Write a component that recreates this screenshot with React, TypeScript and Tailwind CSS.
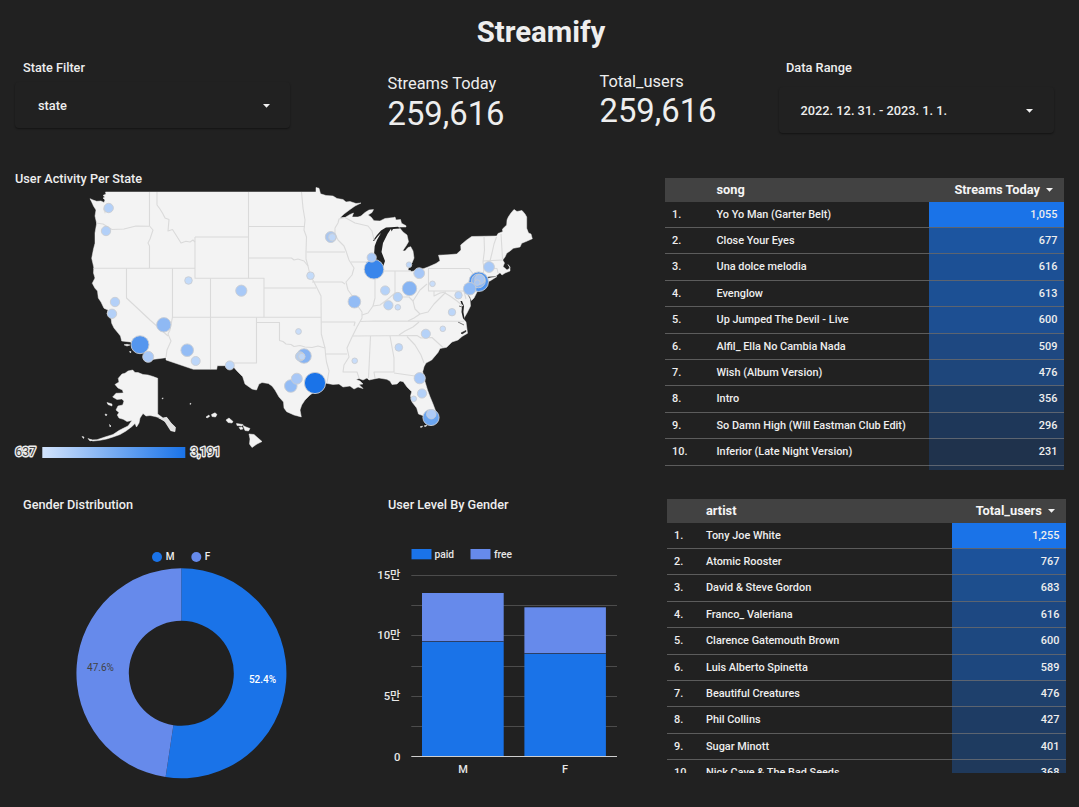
import React from "react";

type Row = { label: string; value: number };

const songs: Row[] = [
  { label: "Yo Yo Man (Garter Belt)", value: 1055 },
  { label: "Close Your Eyes", value: 677 },
  { label: "Una dolce melodia", value: 616 },
  { label: "Evenglow", value: 613 },
  { label: "Up Jumped The Devil - Live", value: 600 },
  { label: "Alfil_ Ella No Cambia Nada", value: 509 },
  { label: "Wish (Album Version)", value: 476 },
  { label: "Intro", value: 356 },
  { label: "So Damn High (Will Eastman Club Edit)", value: 296 },
  { label: "Inferior (Late Night Version)", value: 231 },
];

const artists: Row[] = [
  { label: "Tony Joe White", value: 1255 },
  { label: "Atomic Rooster", value: 767 },
  { label: "David & Steve Gordon", value: 683 },
  { label: "Franco_ Valeriana", value: 616 },
  { label: "Clarence Gatemouth Brown", value: 600 },
  { label: "Luis Alberto Spinetta", value: 589 },
  { label: "Beautiful Creatures", value: 476 },
  { label: "Phil Collins", value: 427 },
  { label: "Sugar Minott", value: 401 },
  { label: "Nick Cave & The Bad Seeds", value: 368 },
];

function Caret() {
  return (
    <svg width="7" height="4" viewBox="0 0 7 4" className="shrink-0">
      <path d="M0 0h7L3.5 3.7z" fill="#f1f1f1" />
    </svg>
  );
}

function RankTable({
  rows,
  name,
  metric,
  indexCol,
  valueCol,
  height,
}: {
  rows: Row[];
  name: string;
  metric: string;
  indexCol: string;
  valueCol: string;
  height: string;
}) {
  const max = rows[0].value;
  const heat = (v: number) => ({ backgroundColor: `rgba(26,115,232,${v / max})` });
  return (
    <div className={`w-[399.4px] overflow-hidden text-[10.9px] font-medium text-[#eeeeee] ${height}`}>
      <div className="flex h-[23.7px] items-center bg-[#424242] text-[12.8px] font-bold text-[#f5f5f5]">
        <div className={indexCol} />
        <div className="flex-1 leading-[22px]">{name}</div>
        <div className="flex items-center gap-[6.5px] pr-[11px] leading-[22px]">
          {metric}
          <Caret />
        </div>
      </div>
      {rows.map((r, i) => (
        <div key={r.label} className="flex h-[26.4px]">
          <div className={`border-b border-[#5c5c5c] pl-[7px] leading-[26.8px] ${indexCol}`}>{i + 1}.</div>
          <div className="flex-1 border-b border-[#5c5c5c] leading-[26.8px] whitespace-nowrap">{r.label}</div>
          <div
            className={`border-b border-[#5c6470] pr-[7px] text-right leading-[26.8px] ${valueCol}`}
            style={heat(r.value)}
          >
            {r.value.toLocaleString("en-US")}
          </div>
        </div>
      ))}
      <div className="flex h-2 justify-end">
        <div className={valueCol} style={heat(rows[rows.length - 1].value)} />
      </div>
    </div>
  );
}

const mainland =
  "90,198.7 93,200 96.7,201.3 101,201 104,202.5 105,200 103,198 105,197 103,195.5 106,194 105.5,192 316,192 316,187.5 319,188.3 320.5,193.8 326,195.5 333,196 337,198.5 343,199.5 346,202 350,201.5 356,203.5 361,203 355,206 350,209.5 344,214 340,217.8 345,217.5 350,214.5 353.5,213 352,217 358,217 361,216 365,212.5 369,210 373.5,209.6 372,212.5 368,215 371,217 374,220.7 380,221 385,218.5 394,217.5 395,217 396,220 400.5,219.5 401.5,223.3 406,225.7 406,227 398,227 400,228.3 403,232 407,235 408.5,241.7 406,246 402.7,250.7 405,251 408,247.5 410.7,246.7 413,251 414,258 412,263 409,266 408,270 411.7,271.5 418,270 424,268.5 428,267 436,263.5 440,260.7 439.3,258 438.5,255.2 448,254.8 456.7,254 461,250 460.7,245 466.7,240 471.7,236.5 496.7,236 498,233.5 502.7,231.7 502.5,229 506.7,225 507,220 508.3,217 511,213 514,209.5 517,211.5 522,210.5 525,214 526.7,217 526.7,228.3 528.5,233 531,234 532.3,238.8 526,241.5 521.7,243.3 520,247 513.3,248.3 510,251 506.7,253.3 505,257 502.7,260 504.5,263 503,266.5 507,270 510,268 508,264.5 510,267 510,271 505,273 502,275 500,272.7 496,276 489,276.5 482,279.5 497,276.5 490,281 479,284 478,290 474,298 471.5,300.5 470,297 466,292 470,299 470.5,306 467,313 463.5,319 466,322 467.5,333.3 462,336.5 458,340 452,342 446.7,347.3 440,348.5 438,352.5 431.7,360 426,363 424,366.7 422.7,371.7 425,381.7 427.5,390 430,396.7 433,404 436,412 436.7,420 431.7,425 427,422 424,416 418.5,414 416.7,408 412,402 410.5,396 411.7,391.7 407,387 403.3,381.7 400,381 397,384 392,384.5 390,381 386.7,379.3 379,378 375,378.7 369,380 367,378 363,380 359,378.5 356,379.5 360,381 363,384 359,384.5 363,388.5 358,387 354,389 350,386 343,387 339,384 333,384.5 325,383 317,390 310,395 305,400 301.7,405 300,410 301.3,416.9 294,415 286.7,411.7 284,408 283.5,402 279,397 275,390 272,386 268.3,383.5 262,382.5 259,384 256.5,390 252,389 245,384 242.7,376.7 237,371 233.3,366.7 228,367 225,365.7 217.3,365.7 216.7,369.3 193.3,369.3 166,360 166,357.7 148,360 145,352 139,345 130,341.9 121.7,341 120.5,336 118.3,333.3 114,328 111.7,323.3 111,318 107,314 108,310 104,308.3 101,302 98.3,298 97.5,291 95,288.3 92.3,283.3 95,278 93.5,273 93.8,267.3 91.7,258.3 93.5,249 95,243.3 95,233 96.7,223.3 95,216 96,210 93.5,206 91.7,202";

const lakeMichigan =
  "398,226.7 391,227.3 386,227.5 381,230.5 377,235 373,240.5 374,241 378,236 381,233 377,240 374.7,246 374,255 374,268 376,272 380,271.5 383.3,266 385,261 381.5,252 383,243 387.5,234 391,228.8 391.5,231.5 393,229 400,228.5";

const alaska =
  "132.7,370 135,372.5 138,372.5 143,374.5 148,375 153,376.5 157.7,378.3 157.7,414 163,418 166.7,417.3 171,423 175.5,427.3 175,431.7 170.7,430.7 165,421.7 160,418 155,416.5 150,415.5 146,416 143,413.5 140,418 139,423 136.5,427 135,423.5 131.7,426.7 126,431 120,434.5 113,437 106.7,439 100,440.3 93,441 90,440 97,439.7 105,437 113,434.5 119,430.5 123.3,428.3 128,426 132,420.5 127,421.5 123.3,419.3 119,418 117.3,415 119,412.5 116,410 118,406 122.7,405 124,401 121.7,399 117,399.5 112.7,397 116,393.3 123.3,393 122.5,390 118,388 115,384.5 119,382 118.3,378.3 122,374 125,373.3 128,371";

const borders = [
  "96,223 103,224 112,229.5 124,229 136,226 149,226.3",
  "149.5,192 149.5,226 153,230 150,239 148,243 149.5,246 149.5,268",
  "93.5,268.3 195,268.3",
  "157,192 157,205 160,209 163,214 165,218 169,219.5 168,231 172.5,229.5 176,235 181,243 186,241.3 190,242 193,240 195,242",
  "195,237 248.5,237",
  "195,237 195,278.3 264,278.3 264,317.3",
  "248.5,192 248.5,278.3",
  "248.5,226.5 305,226.5",
  "248.5,258 291.5,258 294,260 298,259 304,261 308,266 310,275 314,282 318,290 321,296 321.3,334 325,348 325.7,356 326.5,362 329,371 327,383",
  "301.5,192 303,208 305,220 304,230 306.5,237 306,252 306,259 308,266",
  "172.5,268.3 172.5,317 170,330 168,334 171,341 167,350 166,357",
  "210.5,278.3 210.5,369",
  "172.5,317.3 321,317.3",
  "264,288 316,288",
  "126.5,268.3 126.5,298 150,320 168,336",
  "256.5,317.3 256.5,363 233,363",
  "256.5,322.5 279.5,322.5 279.5,340.5 283,341.5 286,344 291,344.5 294,346.5 300,345.5 305,347 312,347.5 318,346 325,348",
  "306.5,252 345,252",
  "312,282 342,282 345,284",
  "345,217.5 339,219 338,223 335,228 335,234 338,240 344,246 346,251 349,260 354,268 352,275 346,282 348,290 353,297 357,305 362,312 362,318 357,327 352,337 347,348 349,357 344,365 343,372 357,372 359,378",
  "351,262 374,262",
  "345,217.5 355,223 368,226 372,231 374,240",
  "375,272 375,298 373,306",
  "395,271 395,293",
  "379,271 411,271",
  "321.3,322 355,322 354,326",
  "326,354 347,354",
  "360,321.5 375,321 464,321.3",
  "353,336 417,335.5 421,338 432,337.5 443,347.5",
  "370.5,336 368.5,378",
  "390,336 394,358 394,372 374,372 375,378",
  "394,373 415,376 418,374 422,374",
  "407,336.5 415,345 421,355 424,363",
  "399,335 405,331 413,327 419,322",
  "362,315 368,313 373,306 380,305 388,299 395,293 402,297 409,297 413,301 420,290 427,284",
  "428.5,268 428.5,291 464,291 466,299",
  "428.5,268.5 469,268.5 474,275 470,280 473,285 467,291",
  "484,236 484.5,250 483,262 484,268 483,277",
  "496.5,237 494,244 492,253 490,261",
  "501,234 502,250 502.5,259",
  "483,261 502,260",
  "484,268 497,268.5 498,273",
  "413,301 415,309 420,314 428,312 434,304 440,298 445,293 450,296 457,301 463,306",
  "420,314 414,318 408,321",
  "434,291 434,296 440,293 446,292",
];

const hawaii = [
  "206,417 209,415 209.5,416.5 207,418",
  "211.5,414.5 215,412.8 217,414.5 215.5,417 212,416.5",
  "226,420 229,418 233,421.5 232,423 228,422.5",
  "236.5,423.5 243,424.5 242,426 237,425.5",
  "239,427.5 242,427 243,429 240.5,429.5",
  "243,425.5 246,427 250,428.5 248.5,431 245,430.5",
  "249,434 254,434.5 258,438 262,441.5 257,444 252,447.5 249.5,444 250,439",
];

const islets = [
  "107,402.5 112,404 112,406 108,404.5",
  "105,414 107,414.5 106,416",
  "109.5,424.5 111,426 110,427",
  "82,436.5 84,437 83.5,438.5",
  "88,438.5 92,440 90,441",
  "162,398 163.3,398.3 162.5,399",
  "190,403.3 191,403.5 190.3,404.6",
  "124,344.8 127,344.3 130,345 127,346",
  "129.5,351.5 131,351.5 130.5,353",
  "420,427 422.5,426 422,427.3",
  "424,426 427,425 426,426.5",
];

// cx, cy, radius, fill
const bubbles: [number, number, number, string][] = [
  [108.7, 208, 4.7, "#b3d0f8"],
  [106, 231, 4.7, "#b3d0f8"],
  [188.5, 280.5, 3.8, "#c3dbfa"],
  [241.3, 290.7, 5.6, "#a8c9f7"],
  [310.5, 275.7, 3.8, "#c3dbfa"],
  [115, 302, 4.7, "#b3d0f8"],
  [112, 313.8, 4.7, "#b3d0f8"],
  [163.8, 324.8, 7.2, "#8fb9f4"],
  [140, 344.7, 9, "#5596ee"],
  [148.2, 356.8, 5.5, "#aac9f7"],
  [187.2, 350.2, 6.3, "#93bcf5"],
  [195.7, 361, 4.5, "#bcd6f9"],
  [229.8, 365.4, 4.5, "#bcd6f9"],
  [298.5, 331.5, 2.9, "#c8ddfa"],
  [304, 356, 7.3, "#87b4f3"],
  [300, 356.4, 4.6, "#b6cdec"],
  [301.8, 356.6, 3.3, "#c0d7f6"],
  [290.8, 386, 6.3, "#93bcf5"],
  [296.8, 378.7, 5.5, "#a9c8f6"],
  [315, 383, 10.6, "#1a73e8"],
  [330.8, 237, 5.5, "#aac6ee"],
  [332.3, 237.3, 3.7, "#bfd7f8"],
  [374, 269.3, 9.8, "#3a86eb"],
  [371.7, 257.5, 4.6, "#a9c9f7"],
  [409, 264.7, 2.8, "#bcd6f9"],
  [419.2, 273.2, 5.4, "#a6c7f7"],
  [409.5, 288.5, 7.2, "#86b4f3"],
  [432.5, 283.8, 2.8, "#c8ddfa"],
  [385.2, 290.5, 4.6, "#b5d2f8"],
  [397.8, 297, 4.6, "#b5d2f8"],
  [354.4, 301.7, 6.3, "#93bcf5"],
  [388.4, 305.3, 4.6, "#b5d2f8"],
  [397.8, 307.3, 2.8, "#c8ddfa"],
  [489, 267, 5.4, "#a8c9f7"],
  [478.7, 281.7, 9.8, "#4f94ee"],
  [478.4, 280.9, 6.9, "#8fb8f3"],
  [479.8, 279.3, 5, "#a8c6f2"],
  [477.3, 282.6, 2.8, "#a8c6f2"],
  [469.7, 288.7, 6.3, "#8fbaf5"],
  [458.5, 295.2, 3.7, "#bcd6f9"],
  [452, 312.2, 3.7, "#bcd6f9"],
  [425.8, 333.8, 4.6, "#b5d2f8"],
  [442.8, 328.8, 2.8, "#c8ddfa"],
  [398.8, 347.4, 3.8, "#bcd6f9"],
  [354.7, 360.8, 2.8, "#c8ddfa"],
  [419.7, 378.2, 5.6, "#a8c8f7"],
  [422, 393.5, 4.6, "#b4d1f8"],
  [413.7, 398.8, 2.8, "#c3dbfa"],
  [431, 417.5, 8.1, "#6ba5f0"],
  [431.3, 414.2, 4.7, "#aecbf6"],
];

function UsMap() {
  return (
    <svg width="650" height="284" viewBox="0 186 650 284" className="block">
      <defs>
        <linearGradient id="scale">
          <stop offset="0" stopColor="#d2e3fc" />
          <stop offset="1" stopColor="#1a73e8" />
        </linearGradient>
      </defs>
      <g fill="#f3f3f3" stroke="#f3f3f3" strokeWidth="0.5" strokeLinejoin="round">
        <polygon points={mainland} />
        <polygon points={alaska} />
        {[...hawaii, ...islets].map((p) => (
          <polygon key={p} points={p} />
        ))}
      </g>
      <polygon points="158,418 163,418 166.7,417.3 171,423 175.3,427.5 174.5,431 170.7,430 165,421.5" fill="#e0e0e0" />
      <polygon points={lakeMichigan} fill="#212121" />
      <path d="M460.5 301l1.500 5-.5 6 1.700 7 1.200-1-1-6 .6-6-2-5z" fill="#212121" />
      <path d="M461 333l5-2.500v1l-4 2.500z M459 306l3 1 M458 322l6 3" fill="#212121" stroke="#212121" strokeWidth="0.600" />
      <path d="M103 209l2-4 3 0-1 4-2 5z" fill="#dcdcdc" />
      <g fill="none" stroke="#dadada" strokeWidth="1.1" strokeLinejoin="round">
        {borders.map((p) => (
          <polyline key={p} points={p} />
        ))}
      </g>
      <g stroke="#c9cdd3" strokeWidth="0.9">
        {bubbles.map(([x, y, r, c]) => (
          <circle key={`${x}-${y}`} cx={x} cy={y} r={r} fill={c} />
        ))}
      </g>
      <rect x="42.300" y="447" width="143" height="11" fill="url(#scale)" />
      <g
        fontSize="12.200"
        fill="#424242"
        stroke="#ececec"
        strokeWidth="2.800"
        strokeLinejoin="round"
        paintOrder="stroke"
      >
        <text x="15.300" y="456.300">637</text>
        <text x="190.800" y="456.300">3,191</text>
      </g>
    </svg>
  );
}

function Donut() {
  return (
    <svg width="365" height="250" viewBox="0 540 365 250" className="block">
      <circle cx="157" cy="557" r="5" fill="#1a73e8" />
      <text x="165.800" y="560.300" fontSize="10" fontWeight="500" fill="#eeeeee">M</text>
      <circle cx="196.300" cy="557" r="5" fill="#668aeb" />
      <text x="204.800" y="560.300" fontSize="10" fontWeight="500" fill="#eeeeee">F</text>
      <path d="M181.300 568.300A105 105 0 1 1 165.600 777.100L173.400 725.200A52.500 52.500 0 1 0 181.300 620.800Z" fill="#1a73e8" />
      <path d="M165.600 777.100A105 105 0 0 1 181.300 568.300V620.800A52.500 52.500 0 0 0 173.400 725.200Z" fill="#668aeb" />
      <text x="100.500" y="671" textAnchor="middle" fontSize="10" fill="#424242">47.6%</text>
      <text x="262.500" y="683" textAnchor="middle" fontSize="10" fontWeight="500" fill="#ffffff">52.4%</text>
    </svg>
  );
}

function LevelBars() {
  const grid = [575, 605, 635, 666, 696, 726];
  return (
    <svg width="275" height="250" viewBox="365 540 275 250" className="block">
      <rect x="411.500" y="549" width="20" height="10.300" fill="#1a73e8" />
      <rect x="470.500" y="549" width="20" height="10.300" fill="#668aeb" />
      <g fontSize="10.200" fontWeight="500" fill="#e8e8e8">
        <text x="434.500" y="558">paid</text>
        <text x="494" y="558">free</text>
      </g>
      {grid.map((y) => (
        <rect key={y} x="411.300" y={y} width="205.700" height="1" fill="#4c4c4c" />
      ))}
      <rect x="422" y="593" width="81.700" height="48.500" fill="#668aeb" />
      <rect x="422" y="642" width="81.700" height="114.500" fill="#1a73e8" />
      <rect x="422" y="641" width="81.700" height="1" fill="#2b3f66" />
      <rect x="524.400" y="607.300" width="81.500" height="46" fill="#668aeb" />
      <rect x="524.400" y="654" width="81.500" height="102.500" fill="#1a73e8" />
      <rect x="524.400" y="653" width="81.500" height="1" fill="#2b3f66" />
      <rect x="411.300" y="756" width="205.700" height="1" fill="#cfcfcf" />
      <g fontSize="11.300" fontWeight="500" fill="#e8e8e8" textAnchor="end">
        <text x="400.500" y="579">15만</text>
        <text x="400.500" y="639">10만</text>
        <text x="400.500" y="700">5만</text>
        <text x="400.500" y="761">0</text>
      </g>
      <g fontSize="11" fontWeight="500" fill="#e8e8e8" textAnchor="middle">
        <text x="463" y="773">M</text>
        <text x="565" y="773">F</text>
      </g>
    </svg>
  );
}

function Select({ children, pad }: { children: React.ReactNode; pad: string }) {
  return (
    <div
      className={`flex w-[275px] items-center justify-between rounded-sm pt-[2px] text-[12.8px] font-medium shadow-[0_1px_2px_rgba(0,0,0,0.45)] ${pad}`}
    >
      <span>{children}</span>
      <Caret />
    </div>
  );
}

export default function App() {
  return (
    <div className="flex h-[807px] w-[1079px] flex-col overflow-hidden bg-[#212121] font-['Roboto','Noto_Sans_CJK_KR',sans-serif] text-[#eeeeee]">
      <h1 className="h-[60px] pt-[14px] pl-[3px] text-center text-[29.4px] leading-[36px] font-bold">Streamify</h1>
      <header className="flex h-[118px]">
        <div className="w-[387.5px] pl-[15px]">
          <h2 className="pl-2 text-[12.7px] leading-[16px] font-medium">State Filter</h2>
          <div className="mt-[6px] flex h-[46px]">
            <Select pad="pl-[23px] pr-[20.5px]">state</Select>
          </div>
        </div>
        <div className="w-[212px] pt-[14px]">
          <div className="text-[16.4px] leading-[19px]">Streams Today</div>
          <div className="text-[32.8px] leading-[42px]">259,616</div>
        </div>
        <div className="w-[179px] pt-[12px]">
          <div className="text-[16.4px] leading-[19px]">Total_users</div>
          <div className="text-[32.8px] leading-[40px]">259,616</div>
        </div>
        <div>
          <h2 className="pl-[7.5px] text-[12.8px] leading-[16px] font-medium">Data Range</h2>
          <div className="mt-[11px] flex h-[46px]">
            <Select pad="pl-[22px] pr-[21px]">2022. 12. 31. - 2023. 1. 1.</Select>
          </div>
        </div>
      </header>
      <section className="flex h-[321px]">
        <div className="w-[665px]">
          <h2 className="h-[8px] pl-[15px] text-[12.7px] leading-[2px] font-medium">User Activity Per State</h2>
          <UsMap />
        </div>
        <RankTable
          rows={songs}
          name="song"
          metric="Streams Today"
          indexCol="w-[51.5px]"
          valueCol="w-[135px]"
          height="h-[291.7px]"
        />
      </section>
      <section className="flex flex-1">
        <div className="w-[365px]">
          <h2 className="h-[41px] pl-[23px] text-[12.7px] leading-[12px] font-medium">Gender Distribution</h2>
          <Donut />
        </div>
        <div className="w-[302px]">
          <h2 className="h-[41px] pl-[23px] text-[12.7px] leading-[12px] font-medium">User Level By Gender</h2>
          <LevelBars />
        </div>
        <RankTable
          rows={artists}
          name="artist"
          metric="Total_users"
          indexCol="w-[39px]"
          valueCol="w-[114px]"
          height="h-[273.7px]"
        />
      </section>
    </div>
  );
}
